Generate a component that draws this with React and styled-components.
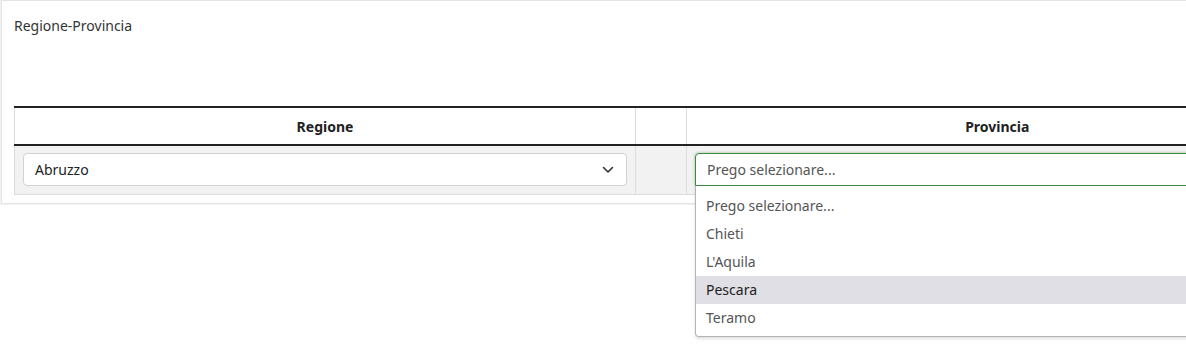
import React from "react";
import styled, { createGlobalStyle } from "styled-components";

const Global = createGlobalStyle`
  html, body { margin: 0; padding: 0; background: #fff; }
  body { font-family: "Noto Sans", "Open Sans", sans-serif; color: #333; }
  * { box-sizing: border-box; }
`;

const Page = styled.div`
  width: 100vw;
  height: 100vh;
  overflow: hidden;
  position: relative;
`;

const Card = styled.div`
  margin-left: 1px;
  width: 1340px;
  border: 1px solid #e4e4e4;
  box-shadow: 0 0 0 1px #f2f2f2;
  padding: 15px 13px 8px 12px;
  background: #fff;
`;

const Title = styled.div`
  font-size: 14px;
  line-height: 20px;
  color: #333;
`;

const Table = styled.table`
  margin-top: 70px;
  border-collapse: collapse;
  table-layout: fixed;
  width: 1293px;
`;

const Th = styled.th`
  width: ${(p) => p.$w}px;
  height: 38px;
  border-top: 2px solid #222;
  border-bottom: 2px solid #222;
  border-left: 1px solid #dcdcdc;
  font-size: 14px;
  font-weight: 700;
  color: #222;
  text-align: center;
  padding: 0;
`;

const Td = styled.td`
  background: #f2f2f2;
  border-left: 1px solid #dcdcdc;
  border-bottom: 1px solid #dcdcdc;
  padding: 7px 8px 8px;
  height: 49px;
`;

const Field = styled.div`
  position: relative;
`;

const SelectBox = styled.div`
  height: 33px;
  background: #fff;
  border: 1px solid ${(p) => (p.$focus ? "#3c8a3f" : "#d2d2d2")};
  border-radius: ${(p) => (p.$focus ? "4px 4px 0 0" : "4px")};
  box-shadow: ${(p) => (p.$focus ? "0 0 3px rgba(60,138,63,0.5)" : "none")};
  display: flex;
  align-items: center;
  justify-content: space-between;
  padding: 0 12px 0 11px;
  font-size: 14px;
  color: ${(p) => (p.$placeholder ? "#555" : "#222")};
`;

const Chevron = () => (
  <svg width="12" height="8" viewBox="0 0 12 8" fill="none">
    <path d="M1.5 1.5 L6 6 L10.5 1.5" stroke="#333" strokeWidth="1.6" strokeLinecap="round" strokeLinejoin="round" />
  </svg>
);

const Menu = styled.ul`
  position: absolute;
  left: 0;
  top: 33px;
  width: 620px;
  margin: 0;
  padding: 6px 0 4px;
  list-style: none;
  background: #fff;
  border: 1px solid #b4b4b4;
  border-top: none;
  border-radius: 0 0 4px 4px;
  box-shadow: 0 2px 3px rgba(0, 0, 0, 0.12);
  z-index: 2;
`;

const Option = styled.li`
  height: 28px;
  line-height: 28px;
  padding: 0 10px;
  font-size: 14px;
  color: ${(p) => (p.$active ? "#222" : "#555")};
  background: ${(p) => (p.$active ? "#e0dfe5" : "transparent")};
`;

const options = ["Prego selezionare...", "Chieti", "L'Aquila", "Pescara", "Teramo"];

export default function App() {
  return (
    <>
      <Global />
      <Page>
        <Card>
          <Title>Regione-Provincia</Title>
          <Table>
            <thead>
              <tr>
                <Th $w={621}>Regione</Th>
                <Th $w={51}></Th>
                <Th $w={621}>Provincia</Th>
              </tr>
            </thead>
            <tbody>
              <tr>
                <Td>
                  <SelectBox>
                    <span>Abruzzo</span>
                    <Chevron />
                  </SelectBox>
                </Td>
                <Td></Td>
                <Td>
                  <Field>
                    <SelectBox $focus $placeholder>
                      <span>Prego selezionare...</span>
                    </SelectBox>
                    <Menu>
                      {options.map((o) => (
                        <Option key={o} $active={o === "Pescara"}>
                          {o}
                        </Option>
                      ))}
                    </Menu>
                  </Field>
                </Td>
              </tr>
            </tbody>
          </Table>
        </Card>
      </Page>
    </>
  );
}
